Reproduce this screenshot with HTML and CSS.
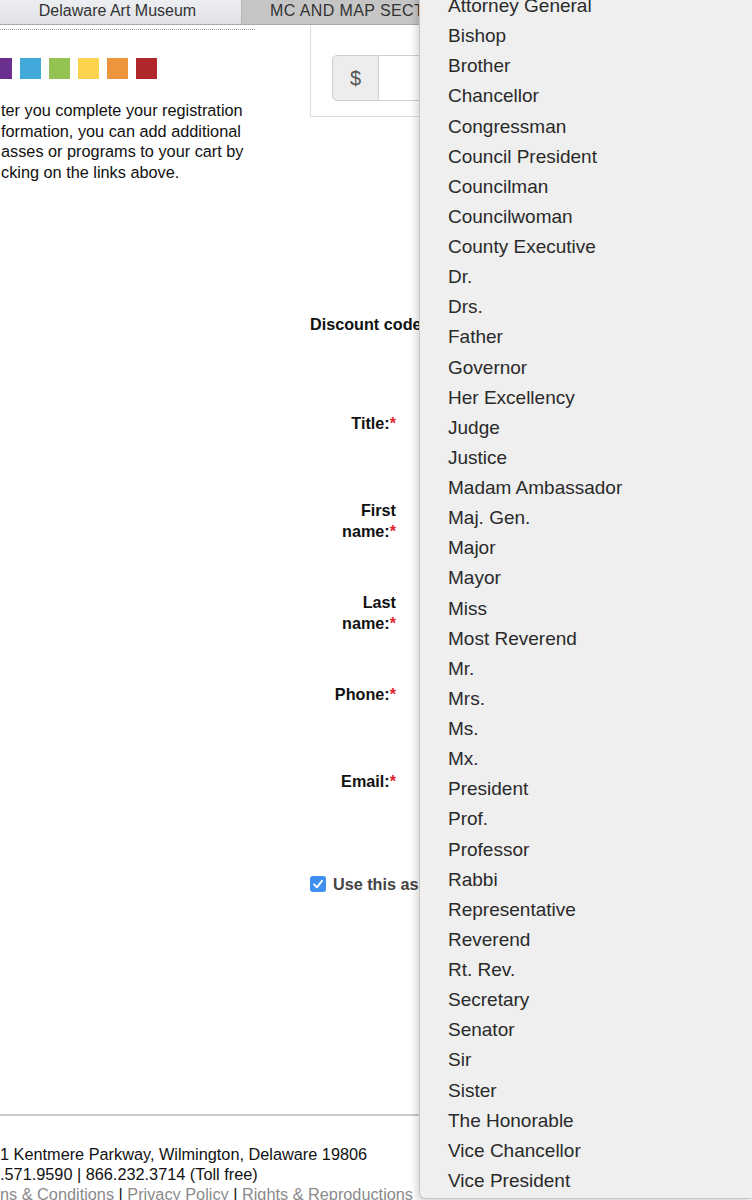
FILE: index.html
```html
<!DOCTYPE html>
<html lang="en">
<head>
<meta charset="utf-8">
<title>Registration</title>
<link rel="stylesheet" href="styles.css">
</head>
<body>
<div class="screen">
  <div class="page">
    <nav class="tabs">
      <div class="tab tab-active">Delaware Art Museum</div>
      <div class="tab tab-other">MC AND MAP SECTIO</div>
    </nav>
    <div class="body">
      <div class="left">
        <div class="dots"></div>
        <div class="swatches">
          <span class="sw sw-purple"></span>
          <span class="sw sw-blue"></span>
          <span class="sw sw-green"></span>
          <span class="sw sw-yellow"></span>
          <span class="sw sw-orange"></span>
          <span class="sw sw-red"></span>
        </div>
        <p class="note">ter you complete your registration<br>formation, you can add additional<br>asses or programs to your cart by<br>cking on the links above.</p>
      </div>
      <div class="right">
        <div class="amount-box">
          <div class="input-group">
            <span class="addon">$</span>
            <span class="field"></span>
          </div>
        </div>
        <div class="form">
          <div class="row row-discount"><div class="label label-wide">Discount code</div></div>
          <div class="row row-87"><div class="label">Title:<span class="req">*</span></div></div>
          <div class="row row-92"><div class="label">First<br>name:<span class="req">*</span></div></div>
          <div class="row row-92"><div class="label">Last<br>name:<span class="req">*</span></div></div>
          <div class="row row-87"><div class="label">Phone:<span class="req">*</span></div></div>
          <div class="row row-102"><div class="label">Email:<span class="req">*</span></div></div>
          <div class="check-row">
            <span class="checkbox"><svg viewBox="0 0 16 16" width="16" height="16"><path d="M4 8.4 L6.9 11.3 L12 4.8" fill="none" stroke="#fff" stroke-width="1.9" stroke-linecap="round" stroke-linejoin="round"/></svg></span>
            <span class="check-label">Use this as</span>
          </div>
        </div>
      </div>
    </div>
    <footer class="footer">
      <div class="foot-line">1 Kentmere Parkway, Wilmington, Delaware 19806</div>
      <div class="foot-line">.571.9590 | 866.232.3714 (Toll free)</div>
      <div class="foot-line"><a class="flink">ns &amp; Conditions</a> | <a class="flink">Privacy Policy</a> | <a class="flink">Rights &amp; Reproductions</a></div>
    </footer>
  </div>
  <ul class="menu">
    <li>Attorney General</li>
    <li>Bishop</li>
    <li>Brother</li>
    <li>Chancellor</li>
    <li>Congressman</li>
    <li>Council President</li>
    <li>Councilman</li>
    <li>Councilwoman</li>
    <li>County Executive</li>
    <li>Dr.</li>
    <li>Drs.</li>
    <li>Father</li>
    <li>Governor</li>
    <li>Her Excellency</li>
    <li>Judge</li>
    <li>Justice</li>
    <li>Madam Ambassador</li>
    <li>Maj. Gen.</li>
    <li>Major</li>
    <li>Mayor</li>
    <li>Miss</li>
    <li>Most Reverend</li>
    <li>Mr.</li>
    <li>Mrs.</li>
    <li>Ms.</li>
    <li>Mx.</li>
    <li>President</li>
    <li>Prof.</li>
    <li>Professor</li>
    <li>Rabbi</li>
    <li>Representative</li>
    <li>Reverend</li>
    <li>Rt. Rev.</li>
    <li>Secretary</li>
    <li>Senator</li>
    <li>Sir</li>
    <li>Sister</li>
    <li>The Honorable</li>
    <li>Vice Chancellor</li>
    <li>Vice President</li>
  </ul>
</div>
</body>
</html>
```
FILE: styles.css
```css
* { box-sizing: border-box; }
html, body { margin: 0; padding: 0; background: #fff; }
body { font-family: "Liberation Sans", Arial, Helvetica, sans-serif; color: #111; }

.screen {
  position: relative;
  width: 752px;
  height: 1200px;
  overflow: hidden;
}

.page {
  width: 752px;
  height: 1204px;
  display: flex;
  flex-direction: column;
}

/* Tabs */
.tabs {
  display: flex;
  height: 25px;
  border-bottom: 1px solid #a9a9ab;
}
.tab {
  font-size: 16px;
  line-height: 21px;
  color: #333;
  height: 24px;
}
.tab-active {
  width: 242px;
  text-align: center;
  padding-right: 6px;
  background: linear-gradient(#eceef2, #dfe1e6);
  border-right: 1px solid #b4b5b8;
}
.tab-other {
  flex: 1;
  padding-left: 28px;
  background: #c5c5c6;
  white-space: nowrap;
  letter-spacing: 0.4px;
}

/* Body */
.body {
  flex: 1;
  display: flex;
}
.left {
  width: 310px;
  padding-top: 4px;
}
.dots {
  width: 255px;
  height: 1px;
  border-bottom: 1px dotted #9a9a9a;
}
.swatches {
  display: flex;
  gap: 8px;
  margin: 28px 0 0 -9px;
}
.sw { width: 21px; height: 21px; display: block; }
.sw-purple { background: #6b2f8f; }
.sw-blue { background: #41a9da; }
.sw-green { background: #93c152; }
.sw-yellow { background: #fbd34c; }
.sw-orange { background: #ec953c; }
.sw-red { background: #b0262a; }

.note {
  margin: 21px 0 0 1px;
  font-size: 16.3px;
  line-height: 20.6px;
  color: #111;
  white-space: nowrap;
}

.right {
  flex: 1;
}
.amount-box {
  border-left: 1px solid #dedede;
  border-bottom: 1px solid #dedede;
  padding: 30px 0 16px 21px;
  height: 92px;
}
.input-group {
  display: flex;
  height: 46px;
}
.addon {
  width: 47px;
  background: #ededed;
  border: 1px solid #cfcfcf;
  border-radius: 5px 0 0 5px;
  font-size: 20px;
  line-height: 44px;
  text-align: center;
  color: #555;
}
.field {
  flex: 1;
  border: 1px solid #cfcfcf;
  border-left: none;
  background: #fff;
}

.form {
  margin-top: 197px;
}
.row {
  display: flex;
}
.row-discount { height: 99px; }
.row-87 { height: 87px; }
.row-92 { height: 92px; }
.row-102 { height: 103px; }
.label {
  width: 86px;
  text-align: right;
  font-weight: bold;
  font-size: 16.2px;
  line-height: 21px;
  color: #111;
}
.label-wide {
  width: auto;
  text-align: left;
  white-space: nowrap;
}
.req { color: #e0262a; }

.check-row {
  display: flex;
  align-items: center;
  gap: 7px;
  height: 20px;
}
.checkbox {
  width: 16px;
  height: 16px;
  border-radius: 3px;
  background: #3e8ff0;
  display: block;
}
.checkbox svg { display: block; }
.check-label {
  font-weight: bold;
  font-size: 16.2px;
  color: #444;
  white-space: nowrap;
}

/* Footer */
.footer {
  border-top: 2px solid #cacaca;
  padding-top: 28px;
  height: 90px;
}
.foot-line {
  font-size: 16.3px;
  line-height: 20px;
  color: #111;
  white-space: nowrap;
}
.flink { color: #8a8a8a; text-decoration: none; }

/* Popup menu */
.menu {
  position: absolute;
  left: 419px;
  top: -13px;
  right: 0;
  margin: 0;
  list-style: none;
  padding: 4px 0 2px 0;
  background: #efefef;
  border-left: 1px solid #c6c6c6;
  border-bottom: 1px solid #c6c6c6;
  border-bottom-left-radius: 6px;
  box-shadow: -2px 3px 9px rgba(0, 0, 0, 0.18);
}
.menu li {
  padding-left: 28px;
  font-size: 19px;
  line-height: 30.13px;
  height: 30.13px;
  color: #2a2a2a;
  white-space: nowrap;
}
```
